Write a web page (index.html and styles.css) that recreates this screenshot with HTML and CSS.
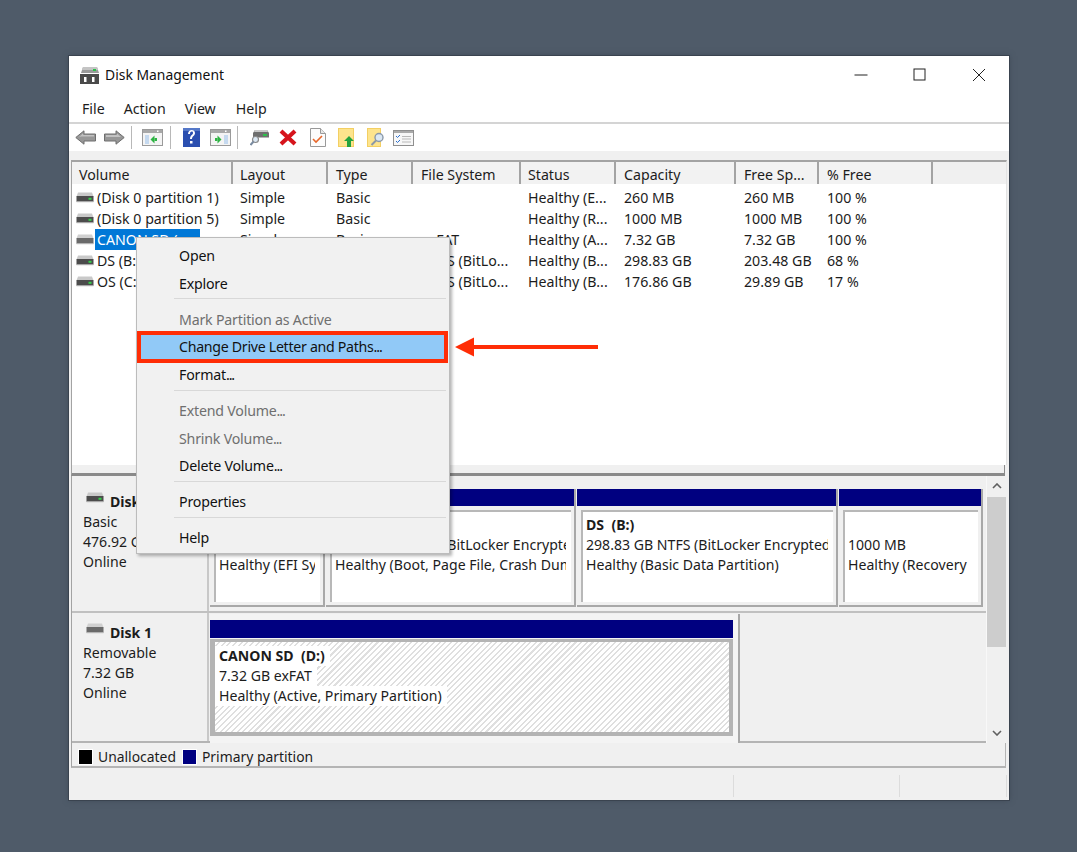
FILE: index.html
```html
<!DOCTYPE html>
<html lang="en">
<head>
<meta charset="utf-8">
<title>Disk Management</title>
<link rel="stylesheet" href="styles.css">
</head>
<body>
<svg class="defs" width="0" height="0" aria-hidden="true">
  <symbol id="disk" viewBox="0 0 18 11">
    <path d="M2 0.5h14l1.500 4h-17z" fill="#c9c9c9"/>
    <rect x="0.500" y="4" width="17" height="5.500" fill="#4c4c4c"/>
    <rect x="0.500" y="9" width="17" height="1.200" fill="#a8a8a8"/>
    <rect x="12.500" y="5.800" width="3" height="2" fill="#35d04a"/>
  </symbol>
  <symbol id="disk-off" viewBox="0 0 18 11">
    <path d="M2 0.5h14l1.500 4h-17z" fill="#d0d0d0"/>
    <rect x="0.500" y="4" width="17" height="5.500" fill="#6a6a6a"/>
    <rect x="0.500" y="9" width="17" height="1.200" fill="#b4b4b4"/>
  </symbol>
</svg>
<div class="window">
  <header class="titlebar">
    <svg class="app-icon" width="21" height="19" viewBox="0 0 21 19">
      <path d="M4 1h14l2 6H2z" fill="#9a9a9a"/>
      <path d="M4 1h14l1 3H3z" fill="#c4c4c4"/>
      <rect x="14" y="3" width="3" height="2" fill="#2cc04a"/>
      <path d="M1 8h19v10H1z" fill="#4a4a4a"/>
      <rect x="5" y="11" width="2.500" height="5" fill="#fff"/>
      <rect x="13" y="11" width="2.500" height="5" fill="#fff"/>
    </svg>
    <span class="title">Disk Management</span>
    <div class="controls">
      <span class="ctl"><svg width="14" height="14" viewBox="0 0 14 14"><path d="M0.500 7h13" stroke="#222" fill="none"/></svg></span>
      <span class="ctl"><svg width="14" height="14" viewBox="0 0 14 14"><rect x="1" y="1" width="11" height="11" stroke="#222" fill="none"/></svg></span>
      <span class="ctl"><svg width="14" height="14" viewBox="0 0 14 14"><path d="M1 1l12 12M13 1L1 13" stroke="#222" fill="none"/></svg></span>
    </div>
  </header>
  <nav class="menubar"><span>File</span><span>Action</span><span>View</span><span class="help-menu">Help</span></nav>
  <div class="toolbar">
    <svg class="ti back" width="21" height="15" viewBox="0 0 21 15"><path d="M0.800 7.500L9 0.800v3.200h11.500v7H9v3.200z" fill="#979797" stroke="#6e6e6e"/><path d="M4 7l4-3.500V5h11v1.500H6z" fill="#c2c2c2"/></svg>
    <svg class="ti fwd" width="21" height="15" viewBox="0 0 21 15"><path d="M20.200 7.500L12 0.800v3.200H0.500v7H12v3.200z" fill="#979797" stroke="#6e6e6e"/><path d="M2 5h11V3.500l4 3.500H2z" fill="#c2c2c2"/></svg>
    <i class="tsep s1"></i>
    <svg class="ti panel1" width="21" height="17" viewBox="0 0 21 17"><rect x="0.500" y="0.500" width="20" height="16" fill="#f4f4f4" stroke="#9a9a9a"/><rect x="1" y="1" width="19" height="3" fill="#a8a8a8"/><rect x="15" y="1.500" width="1.500" height="1.500" fill="#fff"/><rect x="3" y="6" width="4" height="9" fill="#c5d9ef"/><path d="M8.500 10.500l4-4v8z" fill="#2fb344"/><rect x="12.500" y="9" width="2.500" height="3" fill="#2fb344"/></svg>
    <i class="tsep s2"></i>
    <svg class="ti help" width="17" height="19" viewBox="0 0 17 19"><rect width="17" height="19" fill="#2b4fb0"/><path d="M0 0h17v3H0z" fill="#5578c8"/><path d="M5 6c0-5 7-5 7-1 0 3-3 3-3 6H7c0-4 3-4 3-6 0-2-3-2-3 1zM7 13h2.500v2.500H7z" fill="#fff"/></svg>
    <svg class="ti panel2" width="21" height="17" viewBox="0 0 21 17"><rect x="0.500" y="0.500" width="20" height="16" fill="#f4f4f4" stroke="#9a9a9a"/><rect x="1" y="1" width="19" height="3" fill="#a8a8a8"/><rect x="15" y="1.500" width="1.500" height="1.500" fill="#fff"/><rect x="14" y="6" width="4" height="9" fill="#c5d9ef"/><rect x="5" y="9" width="2.500" height="3" fill="#2fb344"/><path d="M7.500 6.500l4 4-4 4z" fill="#2fb344"/></svg>
    <i class="tsep s3"></i>
    <svg class="ti connect" width="20" height="17" viewBox="0 0 20 17"><path d="M5 1h12l2 3v4.500H3V4z" fill="#6e6e6e"/><path d="M5 1h12l1 2H4z" fill="#c8c8c8"/><rect x="13" y="5" width="4" height="2" fill="#2cc04a"/><circle cx="5.500" cy="10.500" r="3" fill="#dbe8f4" stroke="#8a8a8a" stroke-width="1.200"/><path d="M3.500 12.500L0.500 16" stroke="#7a8ba0" stroke-width="2"/></svg>
    <svg class="ti cross" width="18" height="17" viewBox="0 0 18 17"><path d="M2 2l14 13M16 2L2 15" stroke="#d6141c" stroke-width="4.200" fill="none"/></svg>
    <svg class="ti check" width="16" height="19" viewBox="0 0 16 19"><path d="M0.500 0.500h10l5 5v13H0.500z" fill="#fcfcfc" stroke="#999"/><path d="M10.500 0.500v5h5" fill="#e6e6e6" stroke="#999"/><path d="M3 11l3 3 6-6" stroke="#e8672a" stroke-width="1.600" fill="none"/></svg>
    <svg class="ti up" width="17" height="19" viewBox="0 0 17 19"><rect x="0.500" y="0.500" width="15" height="18" fill="#fde48d" stroke="#f3cf63"/><path d="M11 8l5 5h-3v6H9v-6H6z" fill="#24a33d"/></svg>
    <svg class="ti find" width="18" height="19" viewBox="0 0 18 19"><rect x="0.500" y="0.500" width="13" height="18" fill="#fde48d" stroke="#f3cf63"/><circle cx="12" cy="9.500" r="4" fill="#dbe8f4" stroke="#8a98a8" stroke-width="1.400"/><path d="M9 12.500L4.500 17" stroke="#8a98a8" stroke-width="2"/></svg>
    <svg class="ti tasks" width="21" height="16" viewBox="0 0 21 16"><rect x="0.500" y="0.500" width="20" height="15" fill="#f7f7f7" stroke="#8f8f8f"/><rect x="1" y="1" width="19" height="2" fill="#aaa"/><path d="M3 6l1.500 1.500L7 5M3 11l1.500 1.500L7 10" stroke="#2a6fd0" fill="none"/><path d="M9 6.500h9M9 9h9M9 12h9" stroke="#b9b9b9"/></svg>
  </div>
  <div class="band"></div>
  <section class="list">
    <div class="row head">
      <div>Volume</div><div>Layout</div><div>Type</div><div>File System</div><div>Status</div><div>Capacity</div><div>Free Sp...</div><div>% Free</div>
    </div>
    <div class="row"><div class="vol"><svg class="di"><use href="#disk"/></svg><span>(Disk 0 partition 1)</span></div><div>Simple</div><div>Basic</div><div></div><div>Healthy (E...</div><div>260 MB</div><div>260 MB</div><div>100 %</div></div>
    <div class="row"><div class="vol"><svg class="di"><use href="#disk"/></svg><span>(Disk 0 partition 5)</span></div><div>Simple</div><div>Basic</div><div></div><div>Healthy (R...</div><div>1000 MB</div><div>1000 MB</div><div>100 %</div></div>
    <div class="row"><div class="vol"><svg class="di"><use href="#disk-off"/></svg><span class="sel">CANON SD (…</span></div><div>Simple</div><div>Basic</div><div>exFAT</div><div>Healthy (A...</div><div>7.32 GB</div><div>7.32 GB</div><div>100 %</div></div>
    <div class="row"><div class="vol"><svg class="di"><use href="#disk"/></svg><span>DS (B:)</span></div><div>Simple</div><div>Basic</div><div>NTFS (BitLo...</div><div>Healthy (B...</div><div>298.83 GB</div><div>203.48 GB</div><div>68 %</div></div>
    <div class="row"><div class="vol"><svg class="di"><use href="#disk"/></svg><span>OS (C:)</span></div><div>Simple</div><div>Basic</div><div>NTFS (BitLo...</div><div>Healthy (B...</div><div>176.86 GB</div><div>29.89 GB</div><div>17 %</div></div>
  </section>
  <div class="splitter"></div>
  <section class="disks">
    <div class="disk-rows">
      <div class="disk d0">
        <div class="label">
          <div class="lname"><svg class="di"><use href="#disk"/></svg><b>Disk 0</b></div>
          <div>Basic</div><div>476.92 GB</div><div>Online</div>
        </div>
        <div class="parts">
          <div class="part"><div class="bar"></div><div class="box"><div>&nbsp;</div><div>260 MB</div><div>Healthy (EFI System Partition)</div></div></div>
          <div class="part"><div class="bar"></div><div class="box"><div><b>OS &nbsp;(C:)</b></div><div>176.86 GB NTFS (BitLocker Encrypted)</div><div>Healthy (Boot, Page File, Crash Dump, Basic Data Partition)</div></div></div>
          <div class="part"><div class="bar"></div><div class="box"><div><b>DS &nbsp;(B:)</b></div><div>298.83 GB NTFS (BitLocker Encrypted)</div><div>Healthy (Basic Data Partition)</div></div></div>
          <div class="part"><div class="bar"></div><div class="box"><div>&nbsp;</div><div>1000 MB</div><div>Healthy (Recovery</div></div></div>
        </div>
      </div>
      <div class="disk d1">
        <div class="label">
          <div class="lname"><svg class="di"><use href="#disk-off"/></svg><b>Disk 1</b></div>
          <div>Removable</div><div>7.32 GB</div><div>Online</div>
        </div>
        <div class="parts1">
          <div class="part1">
            <div class="bar1"></div>
            <div class="hatch">
              <div><b class="bg">CANON SD &nbsp;(D:)</b></div>
              <div><span class="bg">7.32 GB exFAT</span></div>
              <div><span class="bg">Healthy (Active, Primary Partition)</span></div>
            </div>
          </div>
        </div>
      </div>
    </div>
    <div class="scroll">
      <svg class="chev" width="10" height="6" viewBox="0 0 10 6"><path d="M1 5l4-4 4 4" fill="none" stroke="#606060" stroke-width="1.600"/></svg>
      <div class="thumb"></div>
      <svg class="chev end" width="10" height="6" viewBox="0 0 10 6"><path d="M1 1l4 4 4-4" fill="none" stroke="#606060" stroke-width="1.600"/></svg>
    </div>
  </section>
  <div class="legend">
    <i class="sw black"></i><span>Unallocated</span><i class="sw navy"></i><span>Primary partition</span>
  </div>
  <footer class="status"><i></i><i></i><i></i></footer>

  <div class="ctx">
    <div class="mi">Open</div>
    <div class="mi">Explore</div>
    <div class="msep"></div>
    <div class="mi off">Mark Partition as Active</div>
    <div class="mi hi">Change Drive Letter and Paths<span class="dots">...</span></div>
    <div class="mi">Format<span class="dots">...</span></div>
    <div class="msep"></div>
    <div class="mi off">Extend Volume<span class="dots">...</span></div>
    <div class="mi off">Shrink Volume<span class="dots">...</span></div>
    <div class="mi">Delete Volume<span class="dots">...</span></div>
    <div class="msep"></div>
    <div class="mi">Properties</div>
    <div class="msep"></div>
    <div class="mi">Help</div>
  </div>
  <svg class="arrow" width="143" height="20" viewBox="0 0 143 20"><path d="M0 10L19 0.500V8H143V12H19V19.500z" fill="#ff2d06"/></svg>
</div>
</body>
</html>
```

FILE: styles.css
```css
* { box-sizing: border-box; }
html, body { margin: 0; height: 100%; }
body {
  background: #4f5b69;
  font: 14.2px/20px "Noto Sans", "Liberation Sans", sans-serif;
  color: #1c1c1c;
  overflow: hidden;
}
.defs { position: absolute; }
.window {
  position: relative;
  width: 940px;
  height: 744px;
  margin: 56px 0 0 69px;
  background: #f0f0f0;
  box-shadow: 0 0 0 1px #3a434f, 0 0 6px #3d4754;
}
.titlebar {
  display: flex;
  align-items: center;
  height: 40px;
  padding-bottom: 2px;
  background: #fff;
  padding-left: 10px;
}
.app-icon { margin-right: 5px; }
.title { color: #111; font-size: 13.9px; }
.controls { display: flex; margin-left: auto; margin-right: 1px; }
.ctl { display: flex; width: 59px; height: 38px; align-items: center; justify-content: center; }
.menubar {
  display: flex;
  height: 26px;
  align-items: center;
  background: #fff;
  padding-left: 13px;
  gap: 19px;
}
.help-menu { margin-left: 1px; }
.toolbar {
  display: flex;
  align-items: center;
  height: 29px;
  background: #fff;
  border-top: 2px solid #d4d4d4;
  padding-left: 6px;
}
.ti { flex: none; }
.fwd { margin-left: 8px; }
.tsep { flex: none; width: 1px; height: 23px; background: #b8b8b8; }
.s1 { margin-left: 6px; }
.panel1 { margin-left: 10px; }
.s2 { margin-left: 7px; }
.help { margin-left: 12px; }
.panel2 { margin-left: 10px; }
.s3 { margin-left: 6px; }
.connect { margin-left: 12px; }
.cross { margin-left: 9px; }
.check { margin-left: 13px; }
.up { margin-left: 12px; }
.find { margin-left: 12px; }
.tasks { margin-left: 8px; }
.band { height: 9px; background: #f0f0f0; }
.list {
  margin: 0 2px;
  height: 305px;
  background: #fff;
  border-top: 2px solid #a3a3a3;
  border-left: 1px solid #a3a3a3;
  border-right: 1px solid #e3e3e3;
  overflow: hidden;
}
.row {
  display: grid;
  grid-template-columns: 161px 95px 85px 108px 95px 120px 83px 114px 1fr;
  height: 21px;
  line-height: 21px;
  white-space: nowrap;
}
.row > div { padding-left: 8px; overflow: hidden; }
.row > div:nth-child(1),
.row > div:nth-child(2),
.row > div:nth-child(5) { padding-left: 7px; }
.head {
  height: 23px;
  line-height: 26px;
  margin-bottom: 2px;
  background: #f0f0f0;
  border-bottom: 1px solid #fff;
}
.head > div { border-right: 2px solid #a3a3a3; background: #f2f2f2; }
.row > div.vol { display: flex; align-items: center; padding-left: 4px; overflow: visible; }
.di { flex: none; width: 18px; height: 11px; margin-right: 3px; }
.sel { width: 105px; height: 21px; background: #0078d7; color: #fff; padding-left: 2px; overflow: hidden; margin-left: -2px; }
.splitter {
  height: 11px;
  margin: 0 4px 0 2px;
  border-bottom: 3px solid #8a8a8a;
  border-right: 1px solid #8a8a8a;
  border-left: 1px solid #a3a3a3;
}
.disks {
  display: flex;
  height: 267px;
  margin-left: 2px;
  border-left: 1px solid #a3a3a3;
  font-size: 14.1px;
}
.disk-rows { flex: none; width: 914px; }
.disk { display: flex; }
.d0 { height: 137px; border-bottom: 2px solid #c0c0c0; }
.d1 { height: 130px; border-bottom: 2px solid #b4b4b4; }
.label {
  flex: none;
  width: 137px;
  padding: 16px 0 0 11px;
  border-right: 2px solid #c8c8c8;
}
.d1 .label { padding-top: 10px; }
.lname { display: flex; align-items: center; height: 20px; }
.lname .di { margin-right: 6px; margin-top: -9px; margin-left: 3px; }
.parts {
  display: grid;
  grid-template-columns: 115px 250px 261px 144px;
  gap: 0 1px;
  padding: 13px 0 0 1px;
  height: 130px;
}
.part { border-right: 2px solid #a8a8a8; border-bottom: 2px solid #a8a8a8; height: 118px; }
.bar { height: 17px; background: #000080; }
.box {
  height: 92px;
  margin: 4px 3px 0 4px;
  padding: 3px 5px 0 3px;
  background: #fff;
  border-top: 2px solid #b8b8b8;
  border-left: 2px solid #b8b8b8;
  white-space: nowrap;
  overflow: hidden;
}
.box > div { height: 20px; overflow: hidden; }
.parts1 { padding: 1px 0 0 1px; }
.part1 {
  width: 530px;
  height: 129px;
  padding: 6px 5px 0 0;
  border-right: 2px solid #a8a8a8;
  background: #f4f4f4;
}
.bar1 { height: 18px; background: #000080; }
.hatch {
  height: 97px;
  margin-top: 1px;
  padding: 4px 0 0 4px;
  border-style: solid;
  border-color: #b4b4b4;
  border-width: 3px 4px 4px 5px;
  background: repeating-linear-gradient(135deg, #fff 0 2.5px, #dfdfdf 2.5px 4px);
  white-space: nowrap;
}
.hatch > div { height: 20px; }
.bg { background: #fff; display: inline-block; height: 20px; margin-left: -4px; padding: 0 5px 0 4px; }
.scroll {
  position: relative;
  flex: none;
  width: 20px;
  background: #f0f0f0;
  border-left: 1px solid #f8f8f8;
}
.chev { position: absolute; left: 5px; top: 7px; }
.chev.end { top: 254px; }
.thumb { position: absolute; left: 0; right: 0; top: 21px; height: 150px; background: #cdcdcd; }
.legend {
  display: flex;
  align-items: center;
  height: 25px;
  margin: 0 3px 0 2px;
  padding: 4px 0 0 6px;
  background: #f0f0f0;
  border-left: 1px solid #a3a3a3;
  border-bottom: 2px solid #b4b4b4;
  border-right: 1px solid #b4b4b4;
  font-size: 13.9px;
}
.sw { flex: none; width: 15px; height: 16px; border: 1px solid #fff; margin-right: 5px; }
.black { background: #000; }
.navy { background: #000080; margin-left: 6px; }
.status {
  height: 30px;
  margin-top: 2px;
  display: grid;
  grid-template-columns: 665px 166px 107px;
}
.status i { border-right: 1px solid #dcdcdc; margin: 5px 0 3px; }
.ctx {
  position: absolute;
  left: 67px;
  top: 181px;
  width: 314px;
  height: 317px;
  padding-top: 4px;
  background: #f1f1f1;
  border: 1px solid #bcbcbc;
  box-shadow: 2px 2px 3px rgba(0,0,0,.3);
  letter-spacing: -0.2px;
}
.mi { height: 27.5px; line-height: 27.5px; padding-left: 42px; color: #111; }
.off { color: #6f6f6f; }
.dots { letter-spacing: -1.1px; }
.msep { height: 8.5px; margin: 0 3px 0 37px; padding-top: 1px; }
.msep::before { content: ""; display: block; height: 1px; background: #d8d8d8; }
.hi {
  height: 24px;
  line-height: 24px;
  margin: 2px 5px 2px 4px;
  padding-left: 38px;
  background: #91c9f7;
  outline: 4px solid #ff2d06;
  letter-spacing: -0.3px;
}
.arrow { position: absolute; left: 386px; top: 281px; }
```
